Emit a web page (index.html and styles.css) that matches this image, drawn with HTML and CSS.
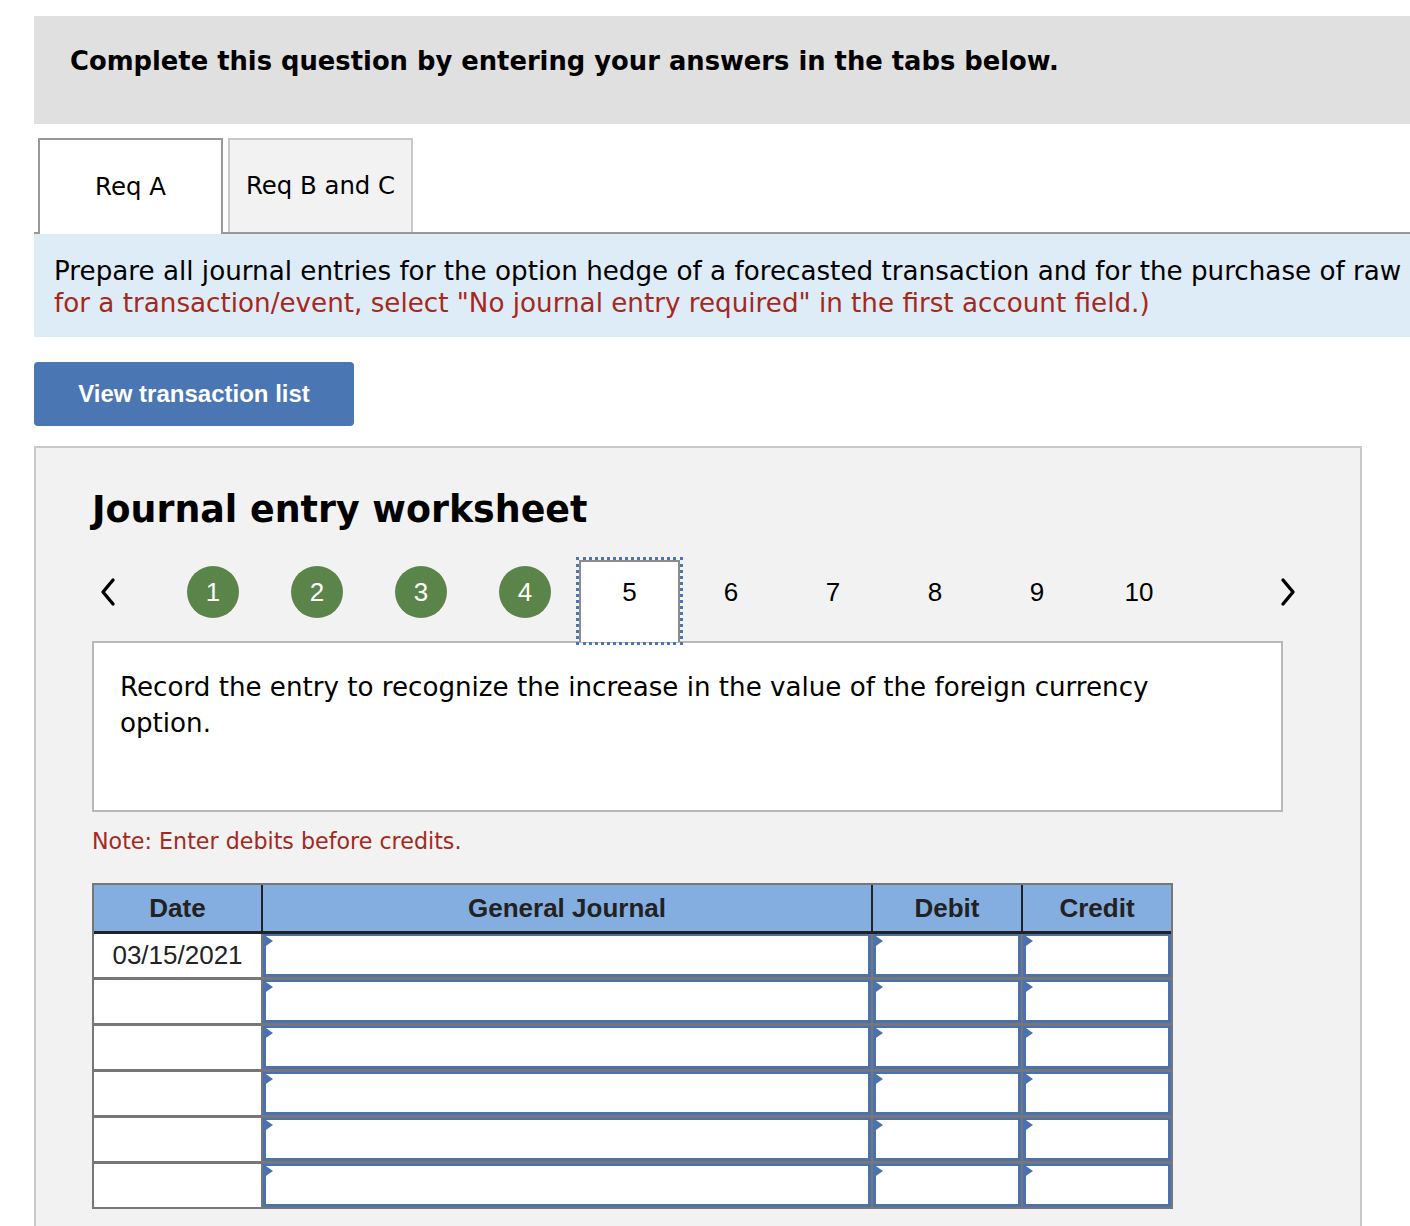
FILE: index.html
```html
<!DOCTYPE html>
<html lang="en">
<head>
<meta charset="utf-8">
<title>Journal entry worksheet</title>
<link rel="stylesheet" href="styles.css">
</head>
<body>
<div class="page">
  <div class="banner"><p class="banner-text">Complete this question by entering your answers in the tabs below.</p></div>
  <div class="tabs">
    <div class="tab tab-active">Req A</div>
    <div class="tab">Req B and C</div>
  </div>
  <div class="instructions">
    <p class="instr-line">Prepare all journal entries for the option hedge of a forecasted transaction and for the purchase of raw</p>
    <p class="instr-line red">for a transaction/event, select "No journal entry required" in the first account field.)</p>
  </div>
  <button class="btn" type="button">View transaction list</button>
  <div class="panel">
    <h2 class="ws-title">Journal entry worksheet</h2>
    <div class="pager">
      <span class="nav nav-prev"><svg width="20" height="30" viewBox="0 0 20 30"><polyline points="15,3 5,15 15,27" fill="none" stroke="#000" stroke-width="3.4" stroke-linecap="round" stroke-linejoin="round"/></svg></span>
      <span class="done"><span class="dot">1</span></span>
      <span class="done"><span class="dot">2</span></span>
      <span class="done"><span class="dot">3</span></span>
      <span class="done"><span class="dot">4</span></span>
      <span class="cur"><span class="cur-inner">5</span></span>
      <span class="todo">6</span>
      <span class="todo">7</span>
      <span class="todo">8</span>
      <span class="todo">9</span>
      <span class="todo">10</span>
      <span class="nav nav-next"><svg width="20" height="30" viewBox="0 0 20 30"><polyline points="5,3 15,15 5,27" fill="none" stroke="#000" stroke-width="3.4" stroke-linecap="round" stroke-linejoin="round"/></svg></span>
    </div>
    <div class="prompt">Record the entry to recognize the increase in the value of the foreign currency option.</div>
    <p class="note">Note: Enter debits before credits.</p>
    <table class="journal">
      <colgroup>
        <col class="c-date"><col class="c-gj"><col class="c-amt"><col class="c-last">
      </colgroup>
      <thead>
        <tr class="head-row"><th>Date</th><th>General Journal</th><th>Debit</th><th>Credit</th></tr>
      </thead>
      <tbody>
        <tr><td class="date">03/15/2021</td><td><div class="field"></div></td><td><div class="field"></div></td><td><div class="field"></div></td></tr>
        <tr><td class="date"></td><td><div class="field"></div></td><td><div class="field"></div></td><td><div class="field"></div></td></tr>
        <tr><td class="date"></td><td><div class="field"></div></td><td><div class="field"></div></td><td><div class="field"></div></td></tr>
        <tr><td class="date"></td><td><div class="field"></div></td><td><div class="field"></div></td><td><div class="field"></div></td></tr>
        <tr><td class="date"></td><td><div class="field"></div></td><td><div class="field"></div></td><td><div class="field"></div></td></tr>
        <tr><td class="date"></td><td><div class="field"></div></td><td><div class="field"></div></td><td><div class="field"></div></td></tr>
      </tbody>
    </table>
  </div>
</div>
</body>
</html>
```

FILE: styles.css
```css
html, body {
  margin: 0;
  padding: 0;
  overflow: hidden;
  background: #fff;
  color: #000;
}

.page {
  margin: 16px 0 0 34px;
  width: 1560px;
  padding-top: 0.1px;
}

.banner {
  height: 108px;
  box-sizing: border-box;
  background: #e0e0e0;
  padding: 29px 0 0 36px;
}

.banner-text {
  margin: 0;
  font: bold 25.8px/32px "DejaVu Sans", Verdana, sans-serif;
  white-space: nowrap;
}

.tabs {
  display: flex;
  align-items: flex-start;
  gap: 5px;
  padding-left: 4px;
  margin-top: 14px;
  height: 94px;
  border-bottom: 2px solid #999;
}

.tab {
  width: 185px;
  height: 94px;
  box-sizing: border-box;
  display: flex;
  align-items: center;
  justify-content: center;
  font: 24.4px/28px "DejaVu Sans", Verdana, sans-serif;
  background: #f2f2f2;
  border: 2px solid #c8c8c8;
  border-bottom: none;
}

.tab-active {
  height: 96px;
  background: #fff;
  border-color: #999;
}

.instructions {
  background: #deecf8;
  padding: 21px 0 18px 20px;
  overflow: hidden;
  white-space: nowrap;
}

.instr-line {
  margin: 0;
  font: 26.2px/32px "DejaVu Sans", Verdana, sans-serif;
}

.red {
  color: #a5281d;
}

.btn {
  display: block;
  margin-top: 25px;
  width: 320px;
  height: 64px;
  padding: 0;
  background: #4a76b4;
  color: #fff;
  border: none;
  border-radius: 4px;
  font: bold 24px "Liberation Sans", Arial, sans-serif;
}

.panel {
  margin-top: 20px;
  width: 1328px;
  box-sizing: border-box;
  background: #f2f2f2;
  border: 2px solid #c8c8c8;
  padding: 40px 0 60px 56px;
}

.ws-title {
  margin: 0;
  font: bold 36.4px/43px "DejaVu Sans", Verdana, sans-serif;
}

.pager {
  display: flex;
  align-items: flex-start;
  height: 70px;
  margin-top: 26px;
  font: 26px/30px "Liberation Sans", Arial, sans-serif;
}

.nav {
  width: 32px;
  height: 70px;
  display: flex;
  align-items: center;
  justify-content: center;
}

.nav-next {
  width: 30px;
  margin-left: 108px;
}

.done,
.todo {
  width: 52px;
  height: 70px;
  display: flex;
  align-items: center;
  justify-content: center;
}

.nav-prev + .done {
  margin-left: 63px;
}

.done + .done {
  margin-left: 52px;
}

.todo + .todo {
  margin-left: 50px;
}

.cur + .todo {
  margin-left: 22px;
}

.dot {
  width: 52px;
  height: 52px;
  border-radius: 50%;
  background: #5a8449;
  color: #fff;
  display: flex;
  align-items: center;
  justify-content: center;
}

.cur {
  position: relative;
  z-index: 1;
  margin-left: 25px;
  width: 107px;
  height: 88px;
  box-sizing: border-box;
  border: 3px dotted #4a76b4;
}

.cur-inner {
  display: block;
  height: 82px;
  box-sizing: border-box;
  background: #fff;
  border: 2px solid #8c8c8c;
  border-bottom: none;
  padding-top: 15px;
  text-align: center;
}

.prompt {
  margin-top: 14px;
  width: 1191px;
  height: 171px;
  box-sizing: border-box;
  background: #fff;
  border: 2px solid #b8b8b8;
  padding: 26px 80px 0 26px;
  font: 26.15px/36px "DejaVu Sans", Verdana, sans-serif;
}

.note {
  margin: 16px 0 0;
  font: 22.2px/26px "DejaVu Sans", Verdana, sans-serif;
  color: #a5281d;
}

.journal {
  margin-top: 29px;
  border-collapse: separate;
  border-spacing: 0;
  table-layout: fixed;
  width: 1081px;
  border: 2px solid #777;
  background: #fff;
}

.c-date { width: 169px; }
.c-gj { width: 610px; }
.c-amt { width: 150px; }
.c-last { width: 148px; }

.head-row {
  height: 49px;
}

.journal th {
  padding: 0;
  background: #84aee0;
  color: #222;
  font: bold 26px "Liberation Sans", Arial, sans-serif;
  border-right: 2px solid #222;
  border-bottom: 3px solid #222;
  text-align: center;
}

.journal th:last-child {
  border-right: none;
}

.journal tbody tr {
  height: 46px;
}

.journal tbody tr:last-child {
  height: 43px;
}

.journal td {
  padding: 0;
  border-right: 2px solid #777;
  border-bottom: 3px solid #777;
  vertical-align: top;
}

.journal td:last-child {
  border-right: none;
}

.journal tbody tr:last-child td {
  border-bottom: none;
}

.journal td.date {
  vertical-align: middle;
  text-align: center;
  font: 26px "Liberation Sans", Arial, sans-serif;
  color: #222;
}

.field {
  position: relative;
  height: 43px;
  box-sizing: border-box;
  border: 3px solid #4a72b0;
  border-top-width: 2px;
  background: #fff;
}

.field::before {
  content: "";
  position: absolute;
  left: -3px;
  top: -2px;
  border-left: 10px solid #4a72b0;
  border-top: 7px solid transparent;
  border-bottom: 7px solid transparent;
}
```
